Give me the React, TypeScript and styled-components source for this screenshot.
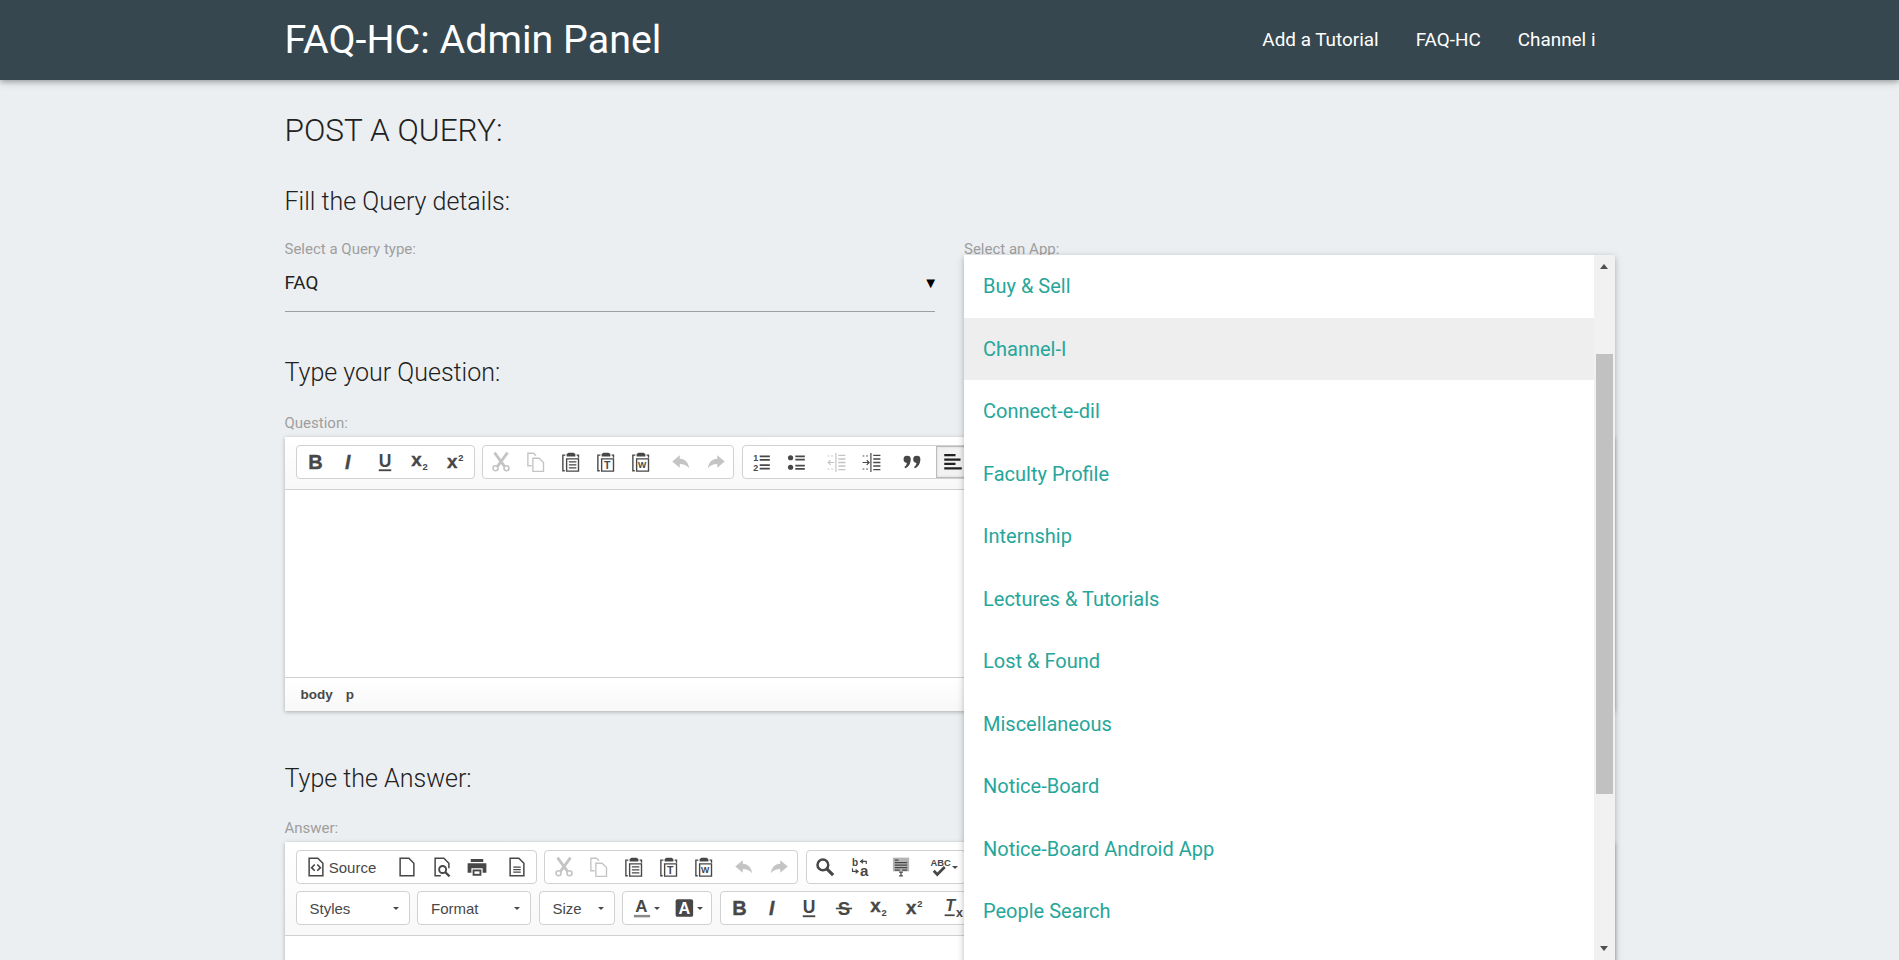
import React from 'react';
import styled, { createGlobalStyle } from 'styled-components';

const GlobalStyle = createGlobalStyle`
  html, body {
    margin: 0;
    height: 960px;
    overflow: hidden;
    background: #eceff1;
    font-family: Roboto, "Liberation Sans", sans-serif;
  }
`;

const NavBar = styled.nav`
  height: 80px;
  background: #37474f;
  box-shadow: 0 2px 5px rgba(0, 0, 0, 0.26), 0 2px 10px rgba(0, 0, 0, 0.12);
  position: relative;
  z-index: 2;
`;

const Wrap = styled.div`
  width: 1330px;
  margin: 0 auto;
`;

const NavInner = styled(Wrap)`
  display: flex;
  justify-content: space-between;
  align-items: center;
  height: 78px;
`;

const Brand = styled.a`
  color: #fff;
  font-size: 39.4px;
`;

const NavLinks = styled.div`
  display: flex;
`;

const NavLink = styled.a`
  color: #fff;
  font-size: 18.9px;
  padding: 0 18.5px;
  &:last-child {
    padding-right: 19px;
  }
`;

const Main = styled(Wrap)`
  position: relative;
  padding-top: 33px;
`;

const PageTitle = styled.h4`
  margin: 0;
  font-weight: 300;
  font-size: 31.6px;
  line-height: 36px;
  color: #212121;
`;

const SectionTitle = styled.h5<{ $top: number }>`
  margin: ${(p) => p.$top}px 0 0;
  font-weight: 300;
  font-size: 25px;
  line-height: 30px;
  color: #212121;
`;

const SelectRow = styled.div`
  display: grid;
  grid-template-columns: 1fr 1fr;
  gap: 29px;
  margin-top: 23px;
`;

const FieldLabel = styled.label<{ $top?: number }>`
  display: block;
  margin-top: ${(p) => p.$top ?? 0}px;
  font-size: 15px;
  line-height: 18px;
  color: #9e9e9e;
`;

const SelectBox = styled.div`
  display: flex;
  justify-content: space-between;
  align-items: center;
  height: 50px;
  padding-bottom: 3px;
  border-bottom: 1px solid #9e9e9e;
  font-size: 18.75px;
  color: #212121;
`;

const Caret = styled.span`
  font-size: 15px;
  color: #000;
  margin-right: -3px;
`;

const Editor = styled.div`
  margin-top: 5px;
  background: #fff;
  box-shadow: 0 1px 4px rgba(0, 0, 0, 0.28);
`;

const Toolbar = styled.div`
  display: flex;
  flex-direction: column;
  gap: 7px;
  padding: 8px 11px 10px;
  background: linear-gradient(#fff, #f8f8f8);
  border-bottom: 1px solid #d1d1d1;
`;

const ToolRow = styled.div`
  display: flex;
  gap: 7.5px;
`;

const Group = styled.div<{ $tight?: boolean }>`
  display: flex;
  flex: none;
  height: 32px;
  padding: ${(p) => (p.$tight ? '0' : '0 1px')};
  border: 1px solid #d1d1d1;
  border-radius: 4px;
  background: #fff;
`;

const Tool = styled.span<{ $active?: boolean; $width?: number }>`
  display: flex;
  align-items: center;
  justify-content: center;
  flex: none;
  box-sizing: border-box;
  width: ${(p) => p.$width ?? 35}px;
  gap: 2px;
  height: 32px;
  background: ${(p) => (p.$active ? '#f2f2f2' : 'transparent')};
  box-shadow: ${(p) => (p.$active ? 'inset 0 0 0 1px #bcbcbc, inset 0 0 3px #aaa' : 'none')};
`;

const SourceTool = styled(Tool)`
  gap: 3px;
  padding-left: 3px;
  font-family: "Liberation Sans", Arial, sans-serif;
  font-size: 15px;
  color: #484848;
`;

const ToolGap = styled.span<{ $width?: number }>`
  width: ${(p) => p.$width ?? 5}px;
  flex: none;
`;

const Combo = styled.div<{ $width: number }>`
  display: flex;
  align-items: center;
  justify-content: space-between;
  flex: none;
  box-sizing: border-box;
  width: ${(p) => p.$width}px;
  height: 34px;
  padding: 0 10px 0 13px;
  border: 1px solid #d1d1d1;
  border-radius: 4px;
  background: #fff;
  font-family: "Liberation Sans", Arial, sans-serif;
  font-size: 15px;
  color: #484848;
`;

const MiniCaret = styled.span`
  flex: none;
  width: 0;
  height: 0;
  border-left: 3px solid transparent;
  border-right: 3px solid transparent;
  border-top: 3px solid #484848;
`;

const EditArea = styled.div<{ $height: number }>`
  height: ${(p) => p.$height}px;
  background: #fff;
`;

const PathBar = styled.div`
  display: flex;
  gap: 13px;
  height: 33px;
  align-items: center;
  padding-left: 16px;
  border-top: 1px solid #d1d1d1;
  background: linear-gradient(#fff, #f8f8f8);
  font-family: "Liberation Sans", Arial, sans-serif;
  font-size: 13.5px;
  font-weight: 700;
  color: #484848;
`;

const Popup = styled.div`
  position: absolute;
  top: 175px;
  right: 0;
  width: 651px;
  height: 730px;
  display: flex;
  background: #fff;
  box-shadow: 0 2px 5px rgba(0, 0, 0, 0.2), 0 2px 10px rgba(0, 0, 0, 0.1);
  z-index: 3;
`;

const OptionList = styled.ul`
  flex: 1;
  margin: 0;
  padding: 0;
  list-style: none;
`;

const Option = styled.li<{ $hover?: boolean }>`
  display: flex;
  align-items: center;
  height: 62.5px;
  padding-left: 19.5px;
  font-size: 20px;
  color: #26a69a;
  background: ${(p) => (p.$hover ? '#eeeeee' : '#fff')};
`;

const ScrollBar = styled.div`
  position: relative;
  width: 21px;
  flex: none;
  background: #f1f1f1;
`;

const ScrollThumb = styled.div`
  margin: 99px 2px 0;
  height: 440px;
  background: #c1c1c1;
`;

const ScrollArrow = styled.span<{ $down?: boolean }>`
  position: absolute;
  left: 6px;
  top: ${(p) => (p.$down ? '691px' : '9px')};
  width: 0;
  height: 0;
  border-left: 4.5px solid transparent;
  border-right: 4.5px solid transparent;
  ${(p) => (p.$down ? 'border-top: 5px solid #505050;' : 'border-bottom: 5px solid #505050;')}
`;

const Svg = styled.svg`
  display: block;
  flex: none;
  overflow: visible;
`;

const Glyph = styled.text<{ $italic?: boolean }>`
  font-family: "Liberation Sans", Arial, sans-serif;
  font-weight: 700;
  font-style: ${(p) => (p.$italic ? 'italic' : 'normal')};
`;

const DARK = '#474747';
const OFF = '#c4c4c4';

type IconProps = { color?: string; size?: number; children: React.ReactNode };

const Icon = ({ color = DARK, size = 20, children }: IconProps) => (
  <Svg width={size} height={size} viewBox="0 0 16 16" fill="none" stroke={color} strokeWidth="1">
    {children}
  </Svg>
);

const Bold = () => (
  <Icon>
    <Glyph x="2.6" y="13.8" fontSize="16" fill={DARK} stroke={DARK} strokeWidth="0.3">B</Glyph>
  </Icon>
);
const Italic = () => (
  <Icon>
    <Glyph $italic x="4" y="13.6" fontSize="15.5" fill={DARK} stroke={DARK} strokeWidth="0.3">I</Glyph>
  </Icon>
);
const Underline = () => (
  <Icon>
    <Glyph x="3" y="12" fontSize="14" fill={DARK} stroke="none">U</Glyph>
    <path d="M3 14.6h10" strokeWidth="1.5" />
  </Icon>
);
const Strike = () => (
  <Icon>
    <Glyph x="3" y="13.4" fontSize="15" fill={DARK} stroke="none">S</Glyph>
    <path d="M1.5 8.4h13" strokeWidth="1.3" />
  </Icon>
);
const Sub = () => (
  <Icon>
    <Glyph x="1" y="11" fontSize="15" fill={DARK} stroke={DARK} strokeWidth="0.3">x</Glyph>
    <Glyph x="10" y="14.6" fontSize="7.5" fill={DARK} stroke="none">2</Glyph>
  </Icon>
);
const Sup = () => (
  <Icon>
    <Glyph x="1.6" y="13" fontSize="15" fill={DARK} stroke={DARK} strokeWidth="0.3">x</Glyph>
    <Glyph x="10.6" y="7" fontSize="7.5" fill={DARK} stroke="none">2</Glyph>
  </Icon>
);
const Cut = () => (
  <Icon color={OFF}>
    <circle cx="3.6" cy="13" r="2" strokeWidth="1.3" />
    <circle cx="12.4" cy="13" r="2" strokeWidth="1.3" />
    <path d="M2.8 0.5l8 11M13.2 0.5l-8 11" strokeWidth="2.2" />
  </Icon>
);
const Copy = () => (
  <Icon color={OFF}>
    <path d="M4.5 11H1.5V1h4.5L8 3" strokeWidth="1.1" />
    <path d="M5.5 5h5l3.5 3.5V15.5H5.5z" strokeWidth="1.1" />
  </Icon>
);
const Clipboard = ({ children }: { children?: React.ReactNode }) => (
  <Icon>
    <path d="M3.5 2.5H1.5v12.5h1.5" strokeWidth="1.1" />
    <path d="M4.5 15.3V5.5h9.5v9.8z" strokeWidth="1.1" />
    <path d="M14 4.5v-2h-1.5" strokeWidth="1.1" />
    <path d="M4.5 3.5V1.5L6 .5h4l1.5 1V3.5z" fill={DARK} stroke="none" />
    {children}
  </Icon>
);
const Paste = () => (
  <Clipboard>
    <path d="M6.3 7.8h6M6.3 10.2h6M6.3 12.6h6" />
  </Clipboard>
);
const PasteText = () => (
  <Clipboard>
    <Glyph x="6.3" y="13.4" fontSize="8.5" fill={DARK} stroke="none">T</Glyph>
  </Clipboard>
);
const PasteWord = () => (
  <Clipboard>
    <Glyph x="5.5" y="13" fontSize="7" fill={DARK} stroke="none">W</Glyph>
  </Clipboard>
);
const Undo = () => (
  <Icon color={OFF}>
    <path d="M7 2.5L1 7.5l6 5V9.6c3 0 5.5.8 7.5 3.4C14 8.6 11.5 5.6 7 5.4z" fill={OFF} stroke="none" />
  </Icon>
);
const Redo = () => (
  <Icon color={OFF}>
    <path d="M9 2.5l6 5-6 5V9.6c-3 0-5.5.8-7.5 3.4C2 8.6 4.5 5.6 9 5.4z" fill={OFF} stroke="none" />
  </Icon>
);
const NumList = () => (
  <Icon size={19}>
    <Glyph x="1" y="7" fontSize="7.5" fill={DARK} stroke="none">1</Glyph>
    <Glyph x="1" y="15" fontSize="7.5" fill={DARK} stroke="none">2</Glyph>
    <path d="M6.5 2.8h8.5M6.5 5.8h8.5M6.5 10.2h8.5M6.5 13.2h8.5" strokeWidth="1.5" />
  </Icon>
);
const BulList = () => (
  <Icon size={19}>
    <circle cx="3" cy="4" r="2.2" fill={DARK} stroke="none" />
    <circle cx="3" cy="12" r="2.2" fill={DARK} stroke="none" />
    <path d="M7 2.8h8M7 5.6h8M7 10.6h8M7 13.4h8" strokeWidth="1.5" />
  </Icon>
);
const Indent = ({ off }: { off?: boolean }) => {
  const c = off ? OFF : DARK;
  return (
    <Icon color={c} size={19}>
      <path d="M7.5 0v16" />
      <path d="M9.5 2h6M9.5 5h6M9.5 8h6M9.5 11h6M9.5 14h6" strokeWidth="1.2" />
      <path d="M0.5 2.5h5M0.5 13.5h5" strokeDasharray="1.5 1.5" strokeWidth="0.8" />
      {off ? <path d="M6 8H1M3 6L1 8l2 2" /> : <path d="M0.5 8h5.5M4 6l2 2-2 2" />}
    </Icon>
  );
};
const Quote = () => (
  <Icon>
    <path d="M4.3 3a2.7 2.7 0 0 1 2.7 2.7c0 3.6-1.8 6-4.4 7.3l-.7-1c1.1-.8 1.7-1.7 2-3.3A2.7 2.7 0 0 1 4.3 3zM12 3a2.7 2.7 0 0 1 2.7 2.7c0 3.6-1.8 6-4.4 7.3l-.7-1c1.1-.8 1.7-1.7 2-3.3A2.7 2.7 0 0 1 12 3z" fill={DARK} stroke="none" />
  </Icon>
);
const AlignLeft = () => (
  <Icon color="#222">
    <path d="M1 2.5h9M1 6h13M1 9.5h9M1 13h14" strokeWidth="1.8" />
  </Icon>
);
const SourceIcon = () => (
  <Icon>
    <path d="M2.5 1h7l4 4v10h-11z" strokeWidth="1.2" />
    <path d="M7 6L4.5 8.5 7 11M9 6l2.5 2.5L9 11" strokeWidth="1.3" />
  </Icon>
);
const NewPage = () => (
  <Icon>
    <path d="M2.5 1h7l4 4v10h-11z" strokeWidth="1.2" />
  </Icon>
);
const Preview = () => (
  <Icon>
    <path d="M7 15H2.5V1h7l4 4v4" strokeWidth="1.2" />
    <circle cx="8.5" cy="10" r="2.8" strokeWidth="1.5" />
    <path d="M10.5 12l3.5 3.5" strokeWidth="1.8" />
  </Icon>
);
const Printer = () => (
  <Icon>
    <path d="M3 1.5h10V4H3zM0.5 5h15v7.5h-3V9h-9v3.5h-3z" fill={DARK} stroke="none" />
    <path d="M4.5 10h7v5h-7z" fill={DARK} stroke="none" />
    <path d="M6 11.5h4v2H6z" fill="#fff" stroke="none" />
  </Icon>
);
const Templates = () => (
  <Icon>
    <path d="M2.5 1h7l4 4v10h-11z" strokeWidth="1.2" />
    <path d="M5 8h6M5 10h6M5 12h6" />
  </Icon>
);
const Find = () => (
  <Icon>
    <circle cx="6.3" cy="6.3" r="4.3" strokeWidth="2" />
    <path d="M9.5 9.5l5 5" strokeWidth="2.6" />
  </Icon>
);
const Replace = () => (
  <Icon>
    <Glyph x="1.5" y="7" fontSize="8" fill={DARK} stroke="none">b</Glyph>
    <Glyph x="8" y="15.5" fontSize="12" fill={DARK} stroke="none">a</Glyph>
    <path d="M8 3.5h5v2M10.5 2L8.5 3.5l2 1.5" strokeWidth="0.9" />
    <path d="M2 9v2.5h4M4.5 10l2 1.5-2 1.5" strokeWidth="0.9" />
  </Icon>
);
const SelectAll = () => (
  <Icon>
    <path d="M1.5 0.5h13v11h-13z" fill="#b4b4b4" stroke="none" />
    <path d="M3 2.5h3M3 4.5h10M3 6.5h10M3 8.5h10M3 10.5h4M9 10.5h4" strokeWidth="0.9" />
    <path d="M6.5 12h3M8 12v3M6.5 15h3" />
  </Icon>
);
const SpellCheck = () => (
  <Icon>
    <Glyph x="0.3" y="7.5" fontSize="7.5" fill={DARK} stroke="none">ABC</Glyph>
    <path d="M3 11l2.8 3 6-6" strokeWidth="2.2" />
  </Icon>
);
const TextColor = () => (
  <Icon>
    <Glyph x="2.5" y="11.5" fontSize="13.5" fill={DARK} stroke="none">A</Glyph>
    <path d="M1.5 14.5h13" stroke="#8a8a8a" strokeWidth="2" />
  </Icon>
);
const BgColor = () => (
  <Icon>
    <rect x="0.5" y="1" width="14" height="14" rx="1.5" fill={DARK} stroke="none" />
    <Glyph x="2.8" y="12.5" fontSize="13" fill="#fff" stroke="none">A</Glyph>
  </Icon>
);
const RemoveFormat = () => (
  <Icon>
    <Glyph $italic x="1" y="10.5" fontSize="13" fill={DARK} stroke="none">T</Glyph>
    <Glyph x="9.5" y="15.5" fontSize="10" fill={DARK} stroke="none">x</Glyph>
    <path d="M0.5 13.8h8" strokeWidth="1.4" />
  </Icon>
);

const apps = [
  'Buy & Sell',
  'Channel-I',
  'Connect-e-dil',
  'Faculty Profile',
  'Internship',
  'Lectures & Tutorials',
  'Lost & Found',
  'Miscellaneous',
  'Notice-Board',
  'Notice-Board Android App',
  'People Search',
];

const ClipboardGroup = ({ tight }: { tight?: boolean }) => (
  <Group $tight={tight}>
    <Tool><Cut /></Tool>
    <Tool><Copy /></Tool>
    <Tool><Paste /></Tool>
    <Tool><PasteText /></Tool>
    <Tool><PasteWord /></Tool>
    <ToolGap />
    <Tool><Undo /></Tool>
    <Tool><Redo /></Tool>
  </Group>
);

const App = () => {
  return (
    <>
      <GlobalStyle />
      <NavBar>
        <NavInner>
          <Brand>FAQ-HC: Admin Panel</Brand>
          <NavLinks>
            <NavLink>Add a Tutorial</NavLink>
            <NavLink>FAQ-HC</NavLink>
            <NavLink>Channel i</NavLink>
          </NavLinks>
        </NavInner>
      </NavBar>
      <Main>
        <PageTitle>POST A QUERY:</PageTitle>
        <SectionTitle $top={38}>Fill the Query details:</SectionTitle>
        <SelectRow>
          <div>
            <FieldLabel>Select a Query type:</FieldLabel>
            <SelectBox>
              FAQ
              <Caret>▼</Caret>
            </SelectBox>
          </div>
          <div>
            <FieldLabel>Select an App:</FieldLabel>
            <SelectBox />
          </div>
        </SelectRow>

        <SectionTitle $top={46}>Type your Question:</SectionTitle>
        <FieldLabel $top={26}>Question:</FieldLabel>
        <Editor>
          <Toolbar>
            <ToolRow>
              <Group>
                <Tool><Bold /></Tool>
                <Tool><Italic /></Tool>
                <Tool><Underline /></Tool>
                <Tool><Sub /></Tool>
                <Tool><Sup /></Tool>
              </Group>
              <ClipboardGroup tight />
              <Group>
                <Tool><NumList /></Tool>
                <Tool><BulList /></Tool>
                <ToolGap />
                <Tool><Indent off /></Tool>
                <Tool><Indent /></Tool>
                <ToolGap $width={6} />
                <Tool><Quote /></Tool>
                <ToolGap $width={6} />
                <Tool $active><AlignLeft /></Tool>
              </Group>
            </ToolRow>
          </Toolbar>
          <EditArea $height={187} />
          <PathBar>
            <span>body</span>
            <span>p</span>
          </PathBar>
        </Editor>

        <SectionTitle $top={53}>Type the Answer:</SectionTitle>
        <FieldLabel $top={25}>Answer:</FieldLabel>
        <Editor>
          <Toolbar>
            <ToolRow>
              <Group>
                <SourceTool $width={84}><SourceIcon />Source</SourceTool>
                <ToolGap $width={8} />
                <Tool><NewPage /></Tool>
                <Tool><Preview /></Tool>
                <Tool><Printer /></Tool>
                <ToolGap />
                <Tool><Templates /></Tool>
              </Group>
              <ClipboardGroup />
              <Group>
                <Tool><Find /></Tool>
                <Tool><Replace /></Tool>
                <ToolGap $width={6} />
                <Tool><SelectAll /></Tool>
                <ToolGap $width={5} />
                <Tool $width={40}><SpellCheck /><MiniCaret /></Tool>
              </Group>
            </ToolRow>
            <ToolRow>
              <Combo $width={114}>Styles<MiniCaret /></Combo>
              <Combo $width={114}>Format<MiniCaret /></Combo>
              <Combo $width={76}>Size<MiniCaret /></Combo>
              <Group>
                <Tool $width={44}><TextColor /><MiniCaret /></Tool>
                <Tool $width={42}><BgColor /><MiniCaret /></Tool>
              </Group>
              <Group>
                <Tool><Bold /></Tool>
                <Tool><Italic /></Tool>
                <Tool><Underline /></Tool>
                <Tool><Strike /></Tool>
                <Tool><Sub /></Tool>
                <Tool><Sup /></Tool>
                <ToolGap />
                <Tool><RemoveFormat /></Tool>
              </Group>
            </ToolRow>
          </Toolbar>
          <EditArea $height={187} />
        </Editor>

        <Popup>
          <OptionList>
            {apps.map((app) => (
              <Option key={app} $hover={app === 'Channel-I'}>{app}</Option>
            ))}
          </OptionList>
          <ScrollBar>
            <ScrollArrow />
            <ScrollThumb />
            <ScrollArrow $down />
          </ScrollBar>
        </Popup>
      </Main>
    </>
  );
};

export default App;
